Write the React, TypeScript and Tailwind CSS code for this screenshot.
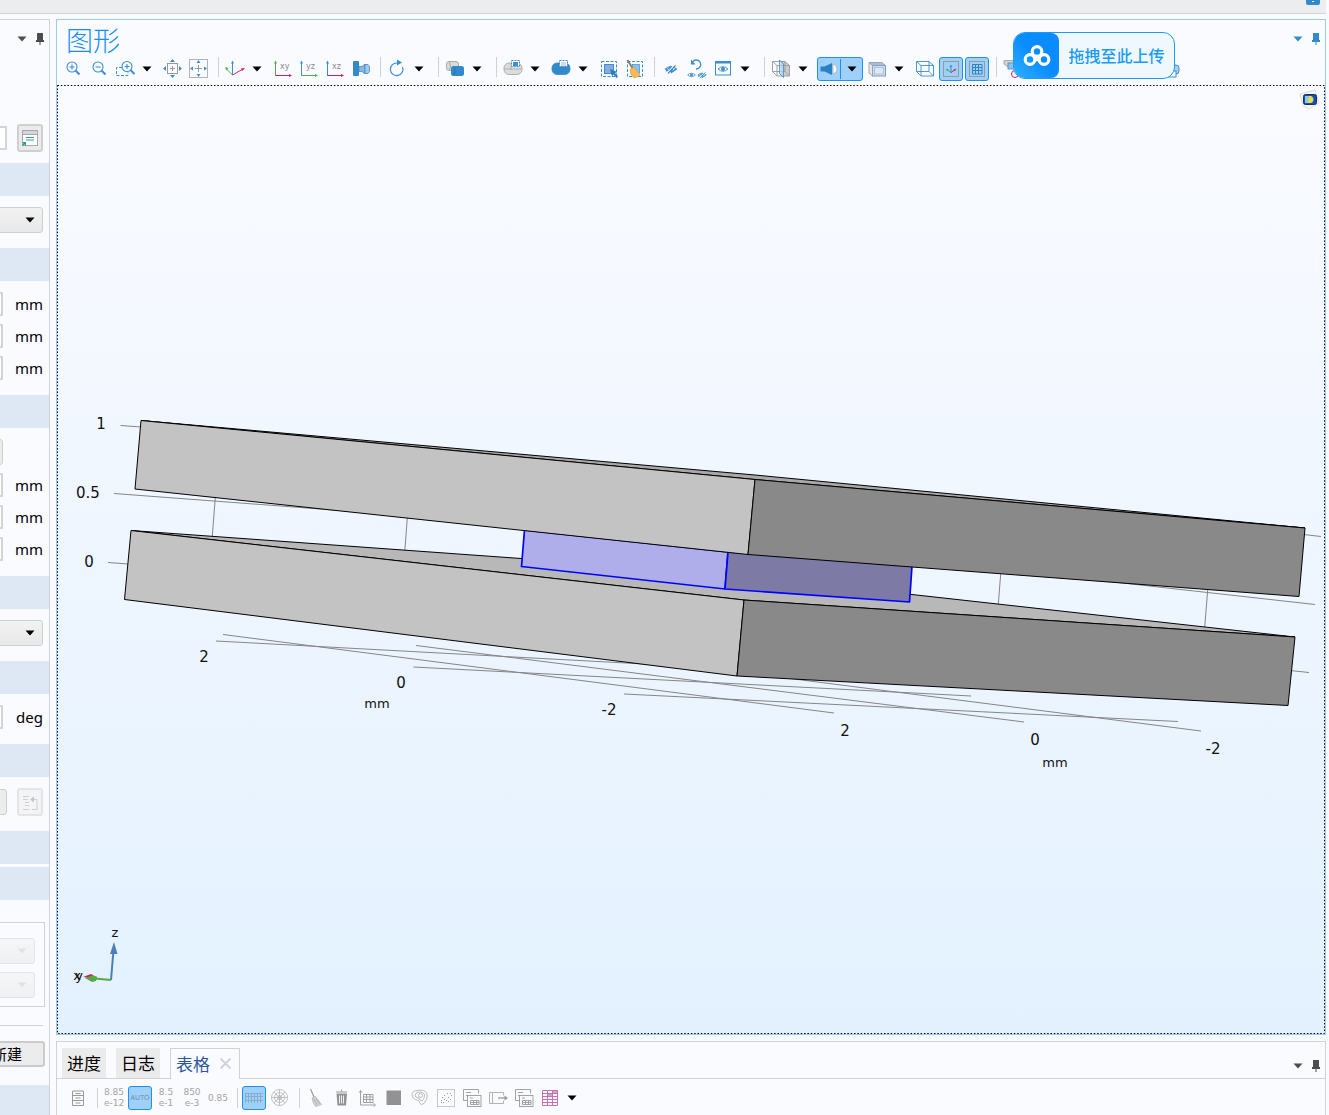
import { ReactNode } from "react";
import clsx from "clsx";

const BLUE = "#3b8fd0";
const PALE = "#7fb0de";
const GRAY = "#999999";
const LIGHT = "#b4b4b4";
const GREEN = "#4caf50";
const PINK = "#d81b60";

function Icon({ children }: { children: ReactNode }) {
  return (
    <svg viewBox="0 0 20 20" className="size-5 shrink-0" fill="none">
      {children}
    </svg>
  );
}

function Arrow({ className = "text-black" }: { className?: string }) {
  return (
    <svg viewBox="0 0 10 6" className={clsx("h-[6px] w-[10px] shrink-0", className)}>
      <path d="M0.5 0.5h9L5 5.5z" fill="currentColor" />
    </svg>
  );
}

function Pin() {
  return (
    <svg viewBox="0 0 10 14" className="h-[14px] w-[10px] shrink-0">
      <path d="M2 1h6v7h1v2H1V8h1z" fill="currentColor" />
      <path d="M5 10v3" stroke="currentColor" strokeWidth="1" />
    </svg>
  );
}

function PanelControls({ className }: { className: string }) {
  return (
    <div className={clsx("flex items-center gap-2", className)}>
      <button aria-label="Panel menu">
        <Arrow className="text-current" />
      </button>
      <button aria-label="Pin panel">
        <Pin />
      </button>
    </div>
  );
}

/* Toolbar pieces */

function Tool({
  label,
  active,
  children,
}: {
  label: string;
  active?: boolean;
  children: ReactNode;
}) {
  return (
    <button
      aria-label={label}
      className={clsx(
        "mx-px flex h-6 w-6 shrink-0 items-center justify-center",
        active && "rounded-[3px] border border-[#1e90f0] bg-[#9fd0fa]"
      )}
    >
      {children}
    </button>
  );
}

function Drop({ label }: { label: string }) {
  return (
    <button
      aria-label={label}
      className="mr-1 flex h-6 w-[18px] shrink-0 items-center justify-center"
    >
      <Arrow />
    </button>
  );
}

function Sep() {
  return <span className="mr-[3px] ml-[6px] h-5 w-px shrink-0 bg-[#cfd1d4]" />;
}

/* Icons */

function Eye({ x, y, slash, s = 1 }: { x: number; y: number; slash?: boolean; s?: number }) {
  return (
    <g transform={`translate(${x} ${y}) scale(${s})`} stroke={BLUE} strokeWidth="1.1">
      <path d="M-5.5 0Q0-5 5.5 0Q0 5-5.5 0z" />
      <circle r="1.6" fill={BLUE} />
      {slash && <path d="M-4 4.500L4-4.500" stroke="#fafbff" strokeWidth="1.2" />}
      {slash && <path d="M-3 4.5L4.5-3.500M-5 2.500L-1-2.500M0 4L4.500 0" />}
    </g>
  );
}

function Magnifier({ x, y, plus, r = 5 }: { x: number; y: number; plus?: boolean; r?: number }) {
  return (
    <g stroke={BLUE}>
      <circle cx={x} cy={y} r={r} strokeWidth="1.1" />
      <path d={`M${x + 3.5} ${y + 3.5}l4 4`} strokeWidth="1.9" />
      <path d={`M${x - 2.5} ${y}h5`} strokeWidth="1.1" />
      {plus && <path d={`M${x} ${y - 2.5}v5`} strokeWidth="1.1" />}
    </g>
  );
}

function PlaneIcon({ name, up, side }: { name: string; up: string; side: string }) {
  return (
    <Icon>
      <path d="M2.5 3v14" stroke={up} />
      <path d="M2.5 1.5L4 4.500H1z" fill={up} />
      <path d="M2.5 16.5h14" stroke={side} />
      <path d="M19 16.5L16 15v3z" fill={side} />
      <text x="7" y="10" className="font-['DejaVu_Sans'] text-[8px]" fill="#8a8a8a">
        {name}
      </text>
    </Icon>
  );
}

function WireCube({ shade }: { shade?: boolean }) {
  return (
    <Icon>
      {shade && <path d="M10 2.5h4l4.5 4V17H10z" fill="#cccccc" />}
      <g stroke={shade ? GRAY : BLUE} strokeWidth="0.9">
        <path d="M1.5 2.5h12.5v10h-12.5zM6 6.5h12.5v10.500h-12.5zM1.5 2.5l4.5 4M14 2.5l4.5 4M14 12.5l4.5 4.5M1.5 12.5l4.5 4.5" />
      </g>
      {shade && (
        <path d="M8.5 1l4 4v13.5l-4-4z" fill="#b9d6ee" fillOpacity="0.7" stroke={BLUE} strokeWidth="0.8" />
      )}
    </Icon>
  );
}

function BodyIcon({ fill, line, box }: { fill: string; line: string; box: string }) {
  return (
    <Icon>
      <rect x="1" y="4" width="18" height="11.5" rx="5" fill={fill} stroke={line} strokeWidth="0.8" />
      <path d="M1.5 10h17M8 5v6" stroke={line} strokeWidth="0.7" />
      <rect x="8.5" y="1.5" width="8" height="6" fill="white" stroke={BLUE} strokeDasharray="2 1" />
      <rect x="10" y="3" width="5" height="4" fill={box} />
    </Icon>
  );
}

function CopyTableIcon() {
  return (
    <Icon>
      <g stroke={GRAY} strokeWidth="0.9">
        <path d="M1.5 1.5h15v4M1.5 1.5v11h4M4 4.5h5M4 7.5h2" />
        <rect x="5.5" y="7.5" width="13.5" height="11" fill="#fafbff" />
        <path d="M8 10h3M8.5 12.5H17v4H8.5zM8.5 14.5H17M11.5 12.5v4M14.5 12.5v4" />
      </g>
    </Icon>
  );
}

function Graphics() {
  const face = "#c3c3c3";
  const shade = "#898989";
  const labels: [number, number, string][] = [
    [101, 429, "1"],
    [88, 498, "0.5"],
    [89, 567, "0"],
    [204, 662, "2"],
    [401, 688, "0"],
    [609, 715, "-2"],
    [845, 736, "2"],
    [1035, 745, "0"],
    [1213, 754, "-2"],
  ];
  return (
    <svg viewBox="57 85 1268 949" className="block w-full bg-linear-to-b from-[#fafbff] to-[#e3f1ff]">
      {/* axis grid */}
      <path
        d="M120.5 425.5L141 427M114 493.5L400 515M108 562.5L128 564M215.5 495L212 540M407.5 515L404.5 555M1304 534.5L1321 536.5M1100 580.5L1315 604.5M1290 670.5L1309 672.5M1001 570L998 608M1208 586L1204.5 630M223 634.5L834 713M216 641L700 667M416 645.5L1024 722M413.5 667L971 696M624 694L1178 721.5M700 667L1201 731"
        stroke="#858585"
        strokeWidth="1"
        fill="none"
      />
      {/* lower plate */}
      <g stroke="#000000" strokeWidth="1" strokeLinejoin="round">
        <path d="M131 530.5L709 572L1295 637L744 600z" fill="#b8b8b8" />
        <path d="M131 530.5L744 600L737 676L124.5 599.5z" fill={face} />
        <path d="M744 600L1295 637L1288 705.5L737 676z" fill={shade} />
      </g>
      {/* selected block */}
      <g stroke="#0000ff" strokeWidth="1.7" strokeLinejoin="round">
        <path d="M524.5 530L728 552L725 589L521.5 566.5z" fill="#b0aeea" />
        <path d="M728 552L912 566L909.5 602L725 589z" fill="#7d7ba6" />
      </g>
      {/* upper plate */}
      <g stroke="#000000" strokeWidth="1" strokeLinejoin="round">
        <path d="M141 420.5L755 475L1305 528L755 479.5z" fill="#a8a8a8" />
        <path d="M141 420.5L755 479.5L748 554.5L135 489z" fill={face} />
        <path d="M755 479.5L1305 528L1299 596.5L748 554.5z" fill={shade} />
      </g>
      <g className="font-['DejaVu_Sans',sans-serif] text-[15px]" fill="#111111" textAnchor="middle">
        {labels.map(([x, y, text]) => (
          <text key={`${x}-${y}`} x={x} y={y}>
            {text}
          </text>
        ))}
      </g>
      <g className="font-['DejaVu_Sans',sans-serif] text-[13px]" fill="#111111" textAnchor="middle">
        <text x="377" y="708">mm</text>
        <text x="1055" y="767">mm</text>
        <text x="115" y="937">z</text>
        <text x="77" y="980">x</text>
        <text x="79" y="980">y</text>
      </g>
      {/* orientation triad */}
      <path d="M111 980L113.5 950" stroke="#4a80b8" strokeWidth="2" />
      <path d="M114 942L117.5 954H110z" fill="#4a80b8" />
      <path d="M83 977L91 974L94 975.5L90 978z" fill={PINK} />
      <path d="M111 980L95 978.5" stroke="#55a845" strokeWidth="2" />
      <path d="M85 978L92 975.5L97 976.5L96 981L92 982z" fill="#55a845" />
      {/* corner badge */}
      <path d="M1300 94l15-4 4 13-10 6-6-3z" fill="#f6f6f6" stroke="#dddddd" />
      <rect x="1303.5" y="94.5" width="13" height="10" rx="2" fill="#1c4fa0" stroke="#10306a" />
      <path d="M1305 96h5a3.500 3.500 0 0 1 0 7h-5z" fill="#8cc8e8" />
      <path d="M1309 96h2q4 3.500 0 7h-3z" fill="#f2d84a" />
      <rect
        x="57.5"
        y="85.5"
        width="1267"
        height="948"
        fill="none"
        stroke="#000000"
        strokeDasharray="1.5 1.83"
      />
    </svg>
  );
}

/* Settings column on the left */

function Band({ className = "mt-[15px]" }: { className?: string }) {
  return <div className={clsx("h-[33px] shrink-0 bg-[#dee8f4]", className)} />;
}

function Field({ unit }: { unit: string }) {
  return (
    <label className="flex h-6 shrink-0 items-center justify-end gap-3 pr-[6px] text-[15px]">
      <input
        aria-label={`Value in ${unit}`}
        className="h-6 w-24 shrink-0 border-2 border-[#d3d4d6] bg-white"
      />
      <span className="w-7 shrink-0 text-right">{unit}</span>
    </label>
  );
}

function Dropdown({ label, disabled }: { label: string; disabled?: boolean }) {
  return (
    <div className={clsx("relative h-[26px] w-32 shrink-0", disabled && "opacity-50")}>
      <select
        aria-label={label}
        disabled={disabled}
        className="h-full w-full appearance-none rounded-[3px] border border-[#cfcfd1] bg-linear-to-b from-[#f2f2f2] to-[#e8e8e8]"
      />
      <span className="pointer-events-none absolute top-[10px] right-2">
        <Arrow className={disabled ? "text-[#cccccc]" : "text-black"} />
      </span>
    </div>
  );
}

function Settings() {
  return (
    <aside className="flex w-[50px] shrink-0 flex-col overflow-hidden border-t border-r border-[#d0d2d5]">
      <PanelControls className="mt-3 h-[14px] shrink-0 justify-end pr-1 text-[#4d4d4d]" />

      <div className="mt-[78px] flex h-7 shrink-0 items-center justify-end gap-[10px] pr-[6px]">
        <input aria-label="Label" className="h-6 w-24 shrink-0 border-2 border-[#d3d4d6] bg-white" />
        <button
          aria-label="Show label options"
          className="flex h-7 w-[26px] shrink-0 items-center justify-center rounded-[3px] border-2 border-[#d0d0d0] bg-[#ebebeb]"
        >
          <Icon>
            <rect x="2.5" y="2.5" width="15" height="15" fill="white" stroke="#a8a8ac" />
            <path d="M3 4.5h14" stroke="#d4d4da" strokeWidth="3" />
            <path d="M2 6.5h16" stroke="#a8a8ac" />
            <path d="M6 9.5h8M6 12h8" stroke="#2aa68a" />
            <path d="M2 14h4v4l-1.500-1.500L2.500 18 2 17.500l1.500-2z" fill="#1ea085" />
          </Icon>
        </button>
      </div>

      <Band className="mt-[11px]" />
      <div className="mt-[11px] flex shrink-0 justify-end pr-[6px]">
        <Dropdown label="Object type" />
      </div>

      <Band />
      <div className="mt-[11px] flex flex-col gap-2">
        <Field unit="mm" />
        <Field unit="mm" />
        <Field unit="mm" />
      </div>

      <Band />
      <div className="mt-[11px] flex shrink-0 justify-end pr-[46px]">
        <button
          aria-label="Base"
          className="h-[26px] w-24 shrink-0 rounded-[3px] border border-[#cfcfd1] bg-[#ececec]"
        />
      </div>
      <div className="mt-2 flex flex-col gap-2">
        <Field unit="mm" />
        <Field unit="mm" />
        <Field unit="mm" />
      </div>

      <Band />
      <div className="mt-[11px] flex shrink-0 justify-end pr-[6px]">
        <Dropdown label="Axis type" />
      </div>

      <Band />
      <div className="mt-[11px]">
        <Field unit="deg" />
      </div>

      <Band />
      <div className="mt-[11px] flex h-7 shrink-0 items-center justify-end gap-[10px] pr-[6px]">
        <button
          aria-label="Coordinate system"
          className="h-[26px] w-24 shrink-0 rounded-[3px] border border-[#cfcfd1] bg-[#ececec]"
        />
        <button
          disabled
          aria-label="Go to source"
          className="flex h-7 w-[26px] shrink-0 items-center justify-center rounded-[3px] border-2 border-[#e4e4e6] bg-[#f4f4f6]"
        >
          <Icon>
            <path d="M3 4.5h6M3 7.5h5M5 10.5h4M5 13.5h4M3 17.5h6M13 7.5h4v10h-5" stroke="#cfcfd2" />
            <path d="M10 7.5l4-3v6z" fill="#c4c4c8" />
          </Icon>
        </button>
      </div>

      <Band />
      <Band className="mt-[3px]" />
      <div className="mt-[22px] flex shrink-0 justify-end pr-1">
        <div className="flex w-40 shrink-0 flex-col items-end gap-2 border border-[#d0d2d5] px-[9px] pt-[15px] pb-2">
          <Dropdown label="Contribute to" disabled />
          <Dropdown label="Selection scope" disabled />
        </div>
      </div>
      <hr className="mt-[18px] mr-[6px] border-[#d0d2d5]" />
      <div className="mt-[15px] flex shrink-0 justify-end pr-1">
        <button className="h-[26px] w-24 shrink-0 rounded-[3px] border-2 border-[#cbcbcd] bg-[#ececec] pr-[21px] pb-px text-right text-[15px] leading-5">
          新建
        </button>
      </div>
      <div className="mt-[18px] min-h-[30px] flex-1 bg-[#dee8f4]" />
    </aside>
  );
}

function GraphicsToolbar() {
  return (
    <div className="flex h-[29px] items-start overflow-hidden pt-px pl-[3px]">
      <Tool label="Zoom in">
        <Icon>
          <Magnifier x={9} y={8} plus />
        </Icon>
      </Tool>
      <Tool label="Zoom out">
        <Icon>
          <Magnifier x={9} y={8} />
        </Icon>
      </Tool>
      <Tool label="Zoom box">
        <Icon>
          <path d="M7 8.5H1.5v8H13v-3" stroke={BLUE} strokeDasharray="3 1.5" />
          <Magnifier x={12} y={7.5} plus />
        </Icon>
      </Tool>
      <Drop label="Zoom options" />
      <Tool label="Zoom extents">
        <Icon>
          <rect x="4.5" y="4.5" width="10" height="10" stroke={GRAY} />
          <path d="M7 9.5h5M9.5 7v5" stroke={GRAY} />
          <path d="M9.5 0l2.500 3H7zM9.5 19l2.500-3H7zM0 9.5L3 7v5zM19 9.5L16 7v5z" fill={BLUE} />
        </Icon>
      </Tool>
      <Tool label="Zoom to selection">
        <Icon>
          <rect x="0.5" y="0.5" width="18" height="18" stroke={LIGHT} />
          <path d="M6 9.5h7M9.5 6v7" stroke={GRAY} />
          <path d="M9.5 1l2 3h-4zM9.5 18l2-3h-4zM1 9.5l3-2v4zM18 9.5l-3-2v4z" fill={BLUE} />
        </Icon>
      </Tool>
      <Sep />
      <Tool label="Default view">
        <Icon>
          <path d="M7.5 16V3" stroke={BLUE} />
          <path d="M7.5 1.5L9 4.500H6z" fill={BLUE} />
          <path d="M7.5 16L1.5 10" stroke={GREEN} />
          <path d="M0 8l3.500 1-2 2.500z" fill={GREEN} />
          <path d="M7.5 16L18 10" stroke={PINK} />
          <path d="M20 9l-2.500 3-1.500-2.500z" fill={PINK} />
        </Icon>
      </Tool>
      <Drop label="View options" />
      <Tool label="xy view">
        <PlaneIcon name="xy" up={GREEN} side={PINK} />
      </Tool>
      <Tool label="yz view">
        <PlaneIcon name="yz" up={BLUE} side={GREEN} />
      </Tool>
      <Tool label="xz view">
        <PlaneIcon name="xz" up={BLUE} side={PINK} />
      </Tool>
      <Tool label="Projection">
        <Icon>
          <rect x="2" y="2" width="6" height="15" rx="1" fill="#338acb" />
          <path d="M8 7.5h3l3-2.500v10l-3-2.500H8z" fill="#8db6dd" stroke={BLUE} strokeWidth="0.8" />
          <path d="M14 5.5h3l1.500 2v5L17 14.500h-3z" fill="#a9c6e4" stroke={BLUE} strokeWidth="0.8" />
        </Icon>
      </Tool>
      <Sep />
      <Tool label="Rotate">
        <Icon>
          <path d="M10 4a6.300 6.300 0 1 0 5.500 4" stroke={BLUE} strokeWidth="1.2" />
          <path d="M10 0.5l5 3-5 3z" fill={BLUE} />
        </Icon>
      </Tool>
      <Drop label="Rotate options" />
      <Sep />
      <Tool label="Select objects">
        <Icon>
          <rect x="1.5" y="2.5" width="12" height="9" rx="2.5" fill="#dadada" stroke={GRAY} strokeWidth="0.8" />
          <path d="M4.5 3q2 4 0 8" stroke={GRAY} strokeWidth="0.8" />
          <rect x="6" y="7" width="13" height="10" rx="2.5" fill="#338acb" />
          <path d="M9 7.5q2 4.500 0 9" stroke="#2670ad" strokeWidth="0.8" />
        </Icon>
      </Tool>
      <Drop label="Selection level" />
      <Sep />
      <Tool label="Select inside">
        <BodyIcon fill="#dcdcdc" line="#a0a0a0" box={BLUE} />
      </Tool>
      <Drop label="Select inside options" />
      <Tool label="Select outside">
        <BodyIcon fill="#338acb" line="#338acb" box="#dcdcdc" />
      </Tool>
      <Drop label="Select outside options" />
      <Tool label="Select box">
        <Icon>
          <rect x="2.5" y="2.5" width="15" height="15" stroke={BLUE} strokeDasharray="3 1.5" />
          <rect x="5.5" y="5.5" width="9" height="9" fill="#88aede" stroke={BLUE} />
          <path d="M11 10l7.500 3-2.500 1 3 3.500-1.500 1.500-3-3.500-1.500 2z" fill="#2b7cbf" />
        </Icon>
      </Tool>
      <Tool label="Clear selection">
        <Icon>
          <rect x="2.5" y="2.5" width="15" height="15" stroke={BLUE} strokeDasharray="3 1.5" />
          <rect x="7.5" y="5.5" width="7" height="9" fill="#8cc3ee" stroke={BLUE} strokeWidth="0.7" />
          <path d="M2.5 1L8 10" stroke="#808080" strokeWidth="2" />
          <path d="M5 10.500l4-2.500 6 8.500-6 2.500q-4-3-4-8.500z" fill="#f6b95c" stroke="#e09a3c" strokeWidth="0.7" />
        </Icon>
      </Tool>
      <Sep />
      <Tool label="Hide">
        <Icon>
          <Eye x={10} y={10} slash />
        </Icon>
      </Tool>
      <Tool label="Reset hiding">
        <Icon>
          <path d="M5.5 3A4.500 4.500 0 1 1 9 10" stroke={BLUE} strokeWidth="1.3" />
          <path d="M4 0.5v5h4.500z" fill={BLUE} />
          <Eye x={4.5} y={16} s={0.7} />
          <Eye x={15} y={16} s={0.75} slash />
        </Icon>
      </Tool>
      <Tool label="Visibility">
        <Icon>
          <rect x="2.5" y="2.5" width="15" height="13.5" stroke={BLUE} />
          <path d="M2 3.5h16" stroke={BLUE} strokeWidth="2" />
          <Eye x={10} y={10} s={0.9} />
        </Icon>
      </Tool>
      <Drop label="Visibility options" />
      <Sep />
      <Tool label="Clipping">
        <WireCube shade />
      </Tool>
      <Drop label="Clipping options" />
      <div className="mx-px flex h-6 w-[46px] shrink-0 items-center rounded-[3px] border border-[#1e90f0] bg-[#9fd0fa]">
        <button aria-label="Scene light" className="flex w-[22px] justify-center">
          <Icon>
            <path d="M1.500 7.5h4L13 4v12l-7.500-3.500h-4z" fill="#2a82c6" />
            <path d="M14 5q4 1 4 5t-4 5z" fill="white" stroke={GRAY} strokeWidth="0.6" />
          </Icon>
        </button>
        <span className="h-5 w-px bg-[#1e90f0]" />
        <button aria-label="Light options" className="flex flex-1 justify-center">
          <Arrow />
        </button>
      </div>
      <Tool label="Transparency">
        <Icon>
          <rect x="5.5" y="6.5" width="13" height="10.5" fill="#d3dfef" stroke="#7d9cc0" />
          <rect x="7.5" y="8.5" width="9" height="6.5" fill="#e2e6ee" stroke={PALE} strokeWidth="0.6" />
          <path d="M2 3.5h13l3.500 3h-13z" fill="#a9bfd9" stroke="#7d9cc0" strokeWidth="0.8" />
          <path d="M2 3.5l3.500 3V17L2 14z" fill="#e6e6ea" stroke={GRAY} strokeWidth="0.8" />
        </Icon>
      </Tool>
      <Drop label="Transparency options" />
      <Tool label="Wireframe">
        <WireCube />
      </Tool>
      <Tool label="Show axes" active>
        <Icon>
          <rect x="2.5" y="2.5" width="15" height="15" stroke={GRAY} />
          <path d="M10 14V7" stroke={BLUE} />
          <path d="M10 5.500l1.500 2.500h-3z" fill={BLUE} />
          <path d="M10 13.500l-3.500-2.500" stroke={GREEN} />
          <path d="M5 9.5l2.500 1-1.500 2z" fill={GREEN} />
          <path d="M10 13.500l3.500-2.500" stroke={PINK} />
          <path d="M15 9.5l-2.500 1 1.500 2z" fill={PINK} />
        </Icon>
      </Tool>
      <Tool label="Show grid" active>
        <Icon>
          <rect x="2.5" y="2.5" width="15" height="15" stroke={GRAY} />
          <path
            d="M5.500 5.5H15V15H5.500zM5.500 8.5H15M5.500 11.5H15M8.500 5.5V15M11.500 5.5V15"
            stroke="#2f82c4"
          />
        </Icon>
      </Tool>
      <Sep />
      <Tool label="Materials">
        <Icon>
          <path d="M1 1.5h14V8H5L1 5z" fill="#d4d4d6" stroke={GRAY} strokeWidth="0.8" />
          <rect x="5" y="4" width="10" height="6" fill="#8cc3ee" stroke={BLUE} strokeWidth="0.8" />
          <circle cx="12" cy="15" r="3.5" stroke={PINK} />
        </Icon>
      </Tool>
      <span className="w-[132px] shrink-0" />
      <Tool label="Snapshot">
        <Icon>
          <rect x="1" y="6" width="17" height="9" rx="3" fill="#a9cdec" stroke={BLUE} />
          <rect x="5" y="12" width="10" height="6" fill="white" stroke={BLUE} />
        </Icon>
      </Tool>
    </div>
  );
}

function UploadButton() {
  return (
    <button className="absolute top-3 right-[150px] flex h-[47px] w-[162px] items-center overflow-hidden rounded-xl border border-[#1a9bf8] bg-[#f0f8ff]">
      <span className="flex h-full w-[45px] items-center justify-center rounded-r-lg bg-linear-to-bl from-[#0a8cff] from-50% to-[#2cb0ff]">
        <svg viewBox="0 0 28 24" className="h-6 w-7" fill="none" stroke="white" strokeWidth="3.2">
          <circle cx="14" cy="7.5" r="4.8" />
          <circle cx="7" cy="15.5" r="4.8" />
          <circle cx="21" cy="15.5" r="4.8" />
          <path d="M10.5 12L14 15.500l3.500-3.500" />
        </svg>
      </span>
      <span className="flex-1 text-center text-base font-medium text-[#1a9bf8]">拖拽至此上传</span>
    </button>
  );
}

function NumberTool({ top, bottom }: { top: string; bottom?: string }) {
  return (
    <button className="mx-px flex h-6 w-6 shrink-0 flex-col items-center justify-center font-['DejaVu_Sans',sans-serif] text-[9px] leading-[11px] whitespace-nowrap text-[#a4a4a4]">
      <span>{top}</span>
      {bottom && <span>{bottom}</span>}
    </button>
  );
}

function TableToolbar() {
  return (
    <div className="flex items-center pt-[7px] pb-[5px] pl-2">
      <Tool label="Table settings">
        <Icon>
          <path
            d="M4.5 3h11M4.5 3v14.5h11V3M4.5 7.5h11M4.5 12.5h11M7.5 5.5h5M7.5 10h5M7.5 15h5"
            stroke={GRAY}
          />
        </Icon>
      </Tool>
      <Sep />
      <NumberTool top="8.85" bottom="e-12" />
      <Tool label="Automatic notation" active>
        <span className="text-[7px] text-[#6d8ba5]">AUTO</span>
      </Tool>
      <NumberTool top="8.5" bottom="e-1" />
      <NumberTool top="850" bottom="e-3" />
      <NumberTool top="0.85" />
      <Sep />
      <Tool label="Table view" active>
        <Icon>
          <path
            d="M1 5.5h18M1 8.5h18M1 12.5h18M1.500 5v10M4.5 5v10M7.5 5v10M10.5 5v10M13.5 5v10M16.5 5v10"
            stroke="#86a9c6"
            strokeWidth="0.9"
          />
        </Icon>
      </Tool>
      <Tool label="Polar view">
        <Icon>
          <g stroke={LIGHT} strokeWidth="0.8">
            <circle cx="9.5" cy="9.5" r="8" />
            <circle cx="9.5" cy="9.5" r="5" />
            <circle cx="9.5" cy="9.5" r="2" />
            <path d="M1.5 9.5h16M9.5 1.5v16M4 4l11 11M15 4L4 15" />
          </g>
        </Icon>
      </Tool>
      <Sep />
      <Tool label="Clear table">
        <Icon>
          <path d="M4.5 1l4 9" stroke={GRAY} strokeWidth="1.2" />
          <path d="M6 10l3.500-1.500 6 8-6 2q-2.500-3-3.500-8.500z" fill="#d6d6d6" stroke={LIGHT} strokeWidth="0.8" />
          <path d="M8 11l3 6M10 10.5l3.500 5.500" stroke={GRAY} strokeWidth="0.6" />
        </Icon>
      </Tool>
      <Tool label="Delete table">
        <Icon>
          <path d="M4 4h11M9.5 1.500v2" stroke="#999999" />
          <path d="M4.5 5.5h10.500l-1 12h-8.500z" fill="#929292" />
          <path d="M7.5 7.5v8M9.5 7.5v8M11.5 7.5v8" stroke="#f0f0f0" />
        </Icon>
      </Tool>
      <Tool label="Table graph">
        <Icon>
          <g stroke={GRAY} strokeWidth="0.9">
            <path d="M2.500 3v14h14M1 4.5l1.500-2L4 4.500M15.500 15.500l2 1.500-2 1.500" />
            <path d="M5.5 6.5H15v8H5.500zM5.500 9H15M5.500 11.500H15M8.500 6.5v8M12 6.5v8" />
          </g>
        </Icon>
      </Tool>
      <Tool label="Table surface">
        <Icon>
          <rect x="2.5" y="2.5" width="14.5" height="14.5" fill="#929292" />
        </Icon>
      </Tool>
      <Tool label="Table contour">
        <Icon>
          <g stroke={LIGHT} strokeWidth="0.9">
            <path d="M2 7q0-4 5-4.500 8-1.500 10 3 1 5-2.500 9.500-4 3-5-0.500 0-3-4-3Q2.500 10.500 2 7z" />
            <path d="M5 7.500q0-3 4-3.500 5 0 5.500 3t-2.500 6q-2.500-.5-3-3Q5 9.500 5 7.500z" />
            <circle cx="10.5" cy="7.5" r="2" />
          </g>
        </Icon>
      </Tool>
      <Tool label="Table points">
        <Icon>
          <rect x="1.5" y="1.5" width="17" height="17" stroke="#c6c8cc" />
          <path
            d="M5 14.5h1M8 11.500h1M6 9.500h1M10 12.500h1M12 9.500h1M14 5.500h1M11 5.500h1M8 7.500h1M14 11.500h1M5 12.500h1M7 14.500h1M15 7.500h1M12 13.500h1"
            stroke={GRAY}
          />
        </Icon>
      </Tool>
      <Tool label="Copy table">
        <CopyTableIcon />
      </Tool>
      <Tool label="Export table">
        <Icon>
          <path d="M1.5 4.5h14v3M1.5 4.5v11h14v-3M4.5 4.5v11" stroke={LIGHT} />
          <path d="M10 10h7" stroke={GRAY} strokeWidth="1.3" />
          <path d="M20 10l-3.500-2.500v5z" fill={GRAY} />
        </Icon>
      </Tool>
      <Tool label="Duplicate table">
        <CopyTableIcon />
      </Tool>
      <Tool label="Display table">
        <Icon>
          <path d="M2.5 5.5h5v3h5v-3h-5zM12.5 2.5h5v3h-5z" fill="#d99fcd" />
          <path
            d="M2.5 2.5h15v15h-15zM2.5 5.5h15M2.5 8.5h15M2.5 11.5h15M2.5 14.5h15M7.5 2.5v15M12.5 2.5v15"
            stroke="#c770b5"
          />
        </Icon>
      </Tool>
      <Drop label="Display table options" />
    </div>
  );
}

export default function App() {
  return (
    <div className="flex min-h-screen flex-col bg-[#fafbff] font-['Noto_Sans','Noto_Sans_CJK_SC',sans-serif] text-black">
      <header className="mr-[3px] flex h-[14px] shrink-0 items-start justify-end border-b border-[#d0d2d5] bg-[#ecedee] pr-[6px]">
        <span className="flex h-[5px] w-[14px] justify-center rounded-b-[2px] bg-[#338acb]">
          <span className="mt-px h-px w-[2px] bg-white" />
        </span>
      </header>

      <div className="flex flex-1 gap-[6px] pt-[5px] pr-[3px]">
        <Settings />

        <main className="flex min-w-0 flex-1 flex-col gap-[6px]">
          <section className="relative border border-[#9acbf5]">
            <div className="flex h-9 items-center justify-between pr-1 pl-[9px]">
              <h1 className="pt-[5px] text-[27px] leading-8 font-light text-[#1890f0]">图形</h1>
              <PanelControls className="pt-[2px] text-[#338acb]" />
            </div>
            <GraphicsToolbar />
            <Graphics />
            <UploadButton />
          </section>

          <section className="flex-1 border border-b-0 border-[#d0d2d5]">
            <div className="flex h-[37px] items-end justify-between border-b border-[#d0d2d5] pr-1 pl-[5px]">
              <div className="flex items-end gap-[10px] text-[17px] leading-[30px]">
                <button className="h-[30px] w-11 bg-[#ebebeb] pt-px">进度</button>
                <button className="h-[30px] w-11 bg-[#ebebeb] pt-px">日志</button>
                <div className="-mb-px flex h-[31px] w-[70px] items-center justify-between border border-b-0 border-[#d0d2d5] bg-[#fafbff] px-[5px]">
                  <button className="pt-px text-[#2a579a]">表格</button>
                  <button aria-label="Close tab">
                    <svg viewBox="0 0 16 16" className="size-4" stroke="#cdd3de" strokeWidth="1.8">
                      <path d="M2.500 2.500l10 10M12.500 2.500l-10 10" />
                    </svg>
                  </button>
                </div>
              </div>
              <PanelControls className="mb-[5px] text-[#4d4d4d]" />
            </div>
            <TableToolbar />
          </section>
        </main>
      </div>
    </div>
  );
}
